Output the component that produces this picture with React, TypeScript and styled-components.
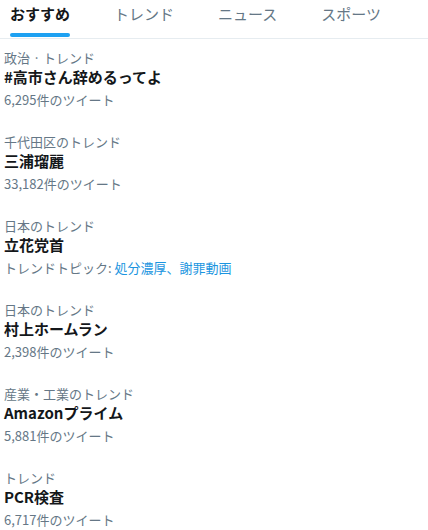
import React from "react";
import styled, { createGlobalStyle } from "styled-components";

const Global = createGlobalStyle`
  html, body { margin: 0; padding: 0; background: #fff; }
  body { font-family: "Noto Sans CJK JP", "Noto Sans", sans-serif; }
`;

const Page = styled.div`
  width: 428px;
  background: #fff;
`;

const TabBar = styled.div`
  display: flex;
  border-bottom: 1px solid #e6ecf0;
  height: 38px;
  padding-left: 10px;
  gap: 44px;
`;

const Tab = styled.div<{ $active?: boolean }>`
  position: relative;
  font-size: 15px;
  line-height: 28px;
  font-weight: ${(p) => (p.$active ? 700 : 400)};
  color: ${(p) => (p.$active ? "#14171a" : "#657786")};
  white-space: nowrap;
  &::after {
    content: "";
    display: ${(p) => (p.$active ? "block" : "none")};
    position: absolute;
    left: 0;
    right: 0;
    bottom: 1px;
    height: 4px;
    border-radius: 2px;
    background: #1da1f2;
  }
`;

const Item = styled.div`
  padding: 10px 5px 14px 4px;
  display: flex;
  flex-direction: column;
`;

const Meta = styled.div`
  font-size: 13px;
  line-height: 18px;
  color: #657786;
`;

const Title = styled.div`
  font-size: 15px;
  line-height: 20px;
  font-weight: 700;
  color: #14171a;
`;

const Sub = styled.div`
  margin-top: 4px;
  font-size: 13px;
  line-height: 18px;
  color: #657786;
`;

const Link = styled.span`
  color: #1b95e0;
`;

const tabs = ["おすすめ", "トレンド", "ニュース", "スポーツ"];

const trends = [
  { meta: "政治 · トレンド", title: "#高市さん辞めるってよ", sub: "6,295件のツイート" },
  { meta: "千代田区のトレンド", title: "三浦瑠麗", sub: "33,182件のツイート" },
  { meta: "日本のトレンド", title: "立花党首", topics: ["処分濃厚", "謝罪動画"] },
  { meta: "日本のトレンド", title: "村上ホームラン", sub: "2,398件のツイート" },
  { meta: "産業・工業のトレンド", title: "Amazonプライム", sub: "5,881件のツイート" },
  { meta: "トレンド", title: "PCR検査", sub: "6,717件のツイート" },
];

export default function App() {
  return (
    <Page>
      <Global />
      <TabBar>
        {tabs.map((t, i) => (
          <Tab key={t} $active={i === 0}>
            {t}
          </Tab>
        ))}
      </TabBar>
      {trends.map((t, i) => (
        <Item key={i}>
          <Meta>{t.meta}</Meta>
          <Title>{t.title}</Title>
          {t.topics ? (
            <Sub>
              トレンドトピック: <Link>{t.topics.join("、")}</Link>
            </Sub>
          ) : (
            <Sub>{t.sub}</Sub>
          )}
        </Item>
      ))}
    </Page>
  );
}
